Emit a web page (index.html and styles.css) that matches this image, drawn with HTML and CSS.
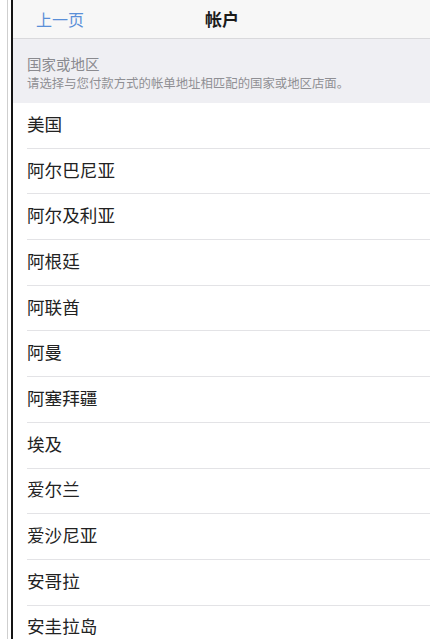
FILE: index.html
```html
<!DOCTYPE html>
<html lang="zh-CN">
<head>
<meta charset="utf-8">
<title>帐户</title>
<link rel="stylesheet" href="styles.css">
</head>
<body>
<div class="frame">
  <div class="screen">
    <header class="nav">
      <span class="back">上一页</span>
      <span class="title">帐户</span>
    </header>
    <section class="section-head">
      <div class="sh-title">国家或地区</div>
      <div class="sh-sub">请选择与您付款方式的帐单地址相匹配的国家或地区店面。</div>
    </section>
    <ul class="list">
      <li class="row"><span>美国</span></li>
      <li class="row"><span>阿尔巴尼亚</span></li>
      <li class="row"><span>阿尔及利亚</span></li>
      <li class="row"><span>阿根廷</span></li>
      <li class="row"><span>阿联酋</span></li>
      <li class="row"><span>阿曼</span></li>
      <li class="row"><span>阿塞拜疆</span></li>
      <li class="row"><span>埃及</span></li>
      <li class="row"><span>爱尔兰</span></li>
      <li class="row"><span>爱沙尼亚</span></li>
      <li class="row"><span>安哥拉</span></li>
      <li class="row"><span>安圭拉岛</span></li>
    </ul>
  </div>
</div>
</body>
</html>
```
FILE: styles.css
```css
html, body {
  margin: 0;
  padding: 0;
  background: #ffffff;
  height: 100%;
  overflow: hidden;
}
body {
  font-family: "Noto Sans CJK SC", "Noto Sans", sans-serif;
}
.frame {
  margin-left: 7px;
  padding-left: 3px;
  border-left: 1px solid #cfcfcf;
  height: 639px;
}
.screen {
  border-left: 2px solid #141414;
  height: 100%;
  background: #ffffff;
}
.nav {
  height: 38px;
  background: #f7f7f7;
  border-bottom: 1px solid #d9d9dc;
  display: grid;
  grid-template-columns: 1fr auto 1fr;
  align-items: center;
  padding: 0 0 0 23px;
}
.back {
  font-size: 16px;
  color: #5a8fd8;
  line-height: 30px;
  justify-self: start;
}
.title {
  font-size: 17px;
  font-weight: 700;
  color: #1b1b1b;
  line-height: 28px;
  padding-right: 22px;
}
.section-head {
  background: #efeff3;
  height: 64px;
  box-sizing: border-box;
  padding: 15px 0 0 14px;
}
.sh-title {
  font-size: 14.5px;
  color: #8a8a8f;
  line-height: 20px;
}
.sh-sub {
  font-size: 12.4px;
  color: #8f8f94;
  line-height: 18px;
}
.list {
  list-style: none;
  margin: 0;
  padding: 0 0 0 14px;
}
.row {
  height: 45.7px;
  box-sizing: border-box;
  display: flex;
  align-items: center;
  border-bottom: 1px solid #e3e3e6;
  font-size: 17.6px;
  color: #222222;
}
.row span {
  line-height: 24px;
  padding-bottom: 3px;
}
```
